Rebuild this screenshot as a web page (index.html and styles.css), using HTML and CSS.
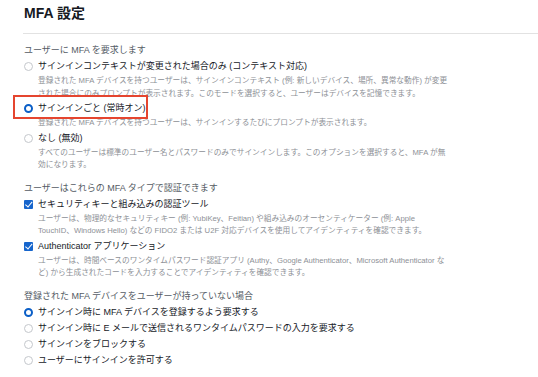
FILE: index.html
```html
<!DOCTYPE html>
<html lang="ja">
<head>
    <meta charset="UTF-8">
    <title>MFA 設定</title>
    <link rel="stylesheet" href="styles.css">
</head>
<body>
    <div class="panel">
        <h2 class="panel-title">MFA 設定</h2>

        <div class="group">
            <div class="group-label">ユーザーに MFA を要求します</div>
            <div class="option">
                <span class="radio"></span>
                <div class="option-body">
                    <div class="option-label">サインインコンテキストが変更された場合のみ (コンテキスト対応)</div>
                    <div class="option-desc">登録された MFA デバイスを持つユーザーは、サインインコンテキスト (例: 新しいデバイス、場所、異常な動作) が変更された場合にのみプロンプトが表示されます。このモードを選択すると、ユーザーはデバイスを記憶できます。</div>
                </div>
            </div>
            <div class="option">
                <span class="highlight"></span>
                <span class="radio checked"></span>
                <div class="option-body">
                    <div class="option-label">サインインごと (常時オン)</div>
                    <div class="option-desc">登録された MFA デバイスを持つユーザーは、サインインするたびにプロンプトが表示されます。</div>
                </div>
            </div>
            <div class="option">
                <span class="radio"></span>
                <div class="option-body">
                    <div class="option-label">なし (無効)</div>
                    <div class="option-desc">すべてのユーザーは標準のユーザー名とパスワードのみでサインインします。このオプションを選択すると、MFA が無効になります。</div>
                </div>
            </div>
        </div>

        <div class="group">
            <div class="group-label">ユーザーはこれらの MFA タイプで認証できます</div>
            <div class="option">
                <span class="checkbox"></span>
                <div class="option-body">
                    <div class="option-label">セキュリティキーと組み込みの認証ツール</div>
                    <div class="option-desc">ユーザーは、物理的なセキュリティキー (例: YubiKey、Feitian) や組み込みのオーセンティケーター (例: Apple TouchID、Windows Hello) などの FIDO2 または U2F 対応デバイスを使用してアイデンティティを確認できます。</div>
                </div>
            </div>
            <div class="option">
                <span class="checkbox"></span>
                <div class="option-body">
                    <div class="option-label">Authenticator アプリケーション</div>
                    <div class="option-desc">ユーザーは、時間ベースのワンタイムパスワード認証アプリ (Authy、Google Authenticator、Microsoft Authenticator など) から生成されたコードを入力することでアイデンティティを確認できます。</div>
                </div>
            </div>
        </div>

        <div class="group">
            <div class="group-label">登録された MFA デバイスをユーザーが持っていない場合</div>
            <div class="option">
                <span class="radio checked"></span>
                <div class="option-label">サインイン時に MFA デバイスを登録するよう要求する</div>
            </div>
            <div class="option">
                <span class="radio"></span>
                <div class="option-label">サインイン時に E メールで送信されるワンタイムパスワードの入力を要求する</div>
            </div>
            <div class="option">
                <span class="radio"></span>
                <div class="option-label">サインインをブロックする</div>
            </div>
            <div class="option">
                <span class="radio"></span>
                <div class="option-label">ユーザーにサインインを許可する</div>
            </div>
        </div>
    </div>
</body>
</html>
```

FILE: styles.css
```css
* {
    margin: 0;
    padding: 0;
    box-sizing: border-box;
}

body {
    font-family: 'Liberation Sans', 'Noto Sans CJK JP', sans-serif;
    background: #fff;
    color: #16191f;
}

.panel {
    padding: 3px 0 0 23px;
}

.panel-title {
    font-size: 14px;
    font-weight: bold;
    line-height: 20px;
    padding: 0 0 10px 1px;
    border-bottom: 1px solid #e2e2e2;
    margin-bottom: 8px;
}

.group {
    padding-left: 1px;
    margin-bottom: 8px;
}

.group-label {
    font-size: 9px;
    line-height: 16px;
    color: #545b64;
}

.option {
    position: relative;
    display: flex;
    align-items: flex-start;
    gap: 5px;
}

.option-label {
    font-size: 9px;
    line-height: 16px;
    color: #16191f;
    white-space: nowrap;
}

.option-desc {
    max-width: 412px;
    margin-top: 1px;
    font-size: 7.7px;
    line-height: 12.5px;
    color: #8d9096;
}

.radio {
    flex: none;
    width: 9px;
    height: 9px;
    margin-top: 4px;
    border: 1px solid #c4c7cc;
    border-radius: 50%;
    background: #fff;
}

.radio.checked {
    border: 2.5px solid #0b5fc7;
}

.checkbox {
    flex: none;
    position: relative;
    width: 9px;
    height: 9px;
    margin-top: 4px;
    border-radius: 1px;
    background: #1665cc;
}

.checkbox::after {
    content: "";
    position: absolute;
    left: 3px;
    top: 0.5px;
    width: 2.5px;
    height: 5.5px;
    border: solid #fff;
    border-width: 0 1.5px 1.5px 0;
    transform: rotate(40deg);
}

.highlight {
    position: absolute;
    left: -11px;
    top: -5px;
    width: 135px;
    height: 24px;
    border: 2px solid #e5452f;
}
```
